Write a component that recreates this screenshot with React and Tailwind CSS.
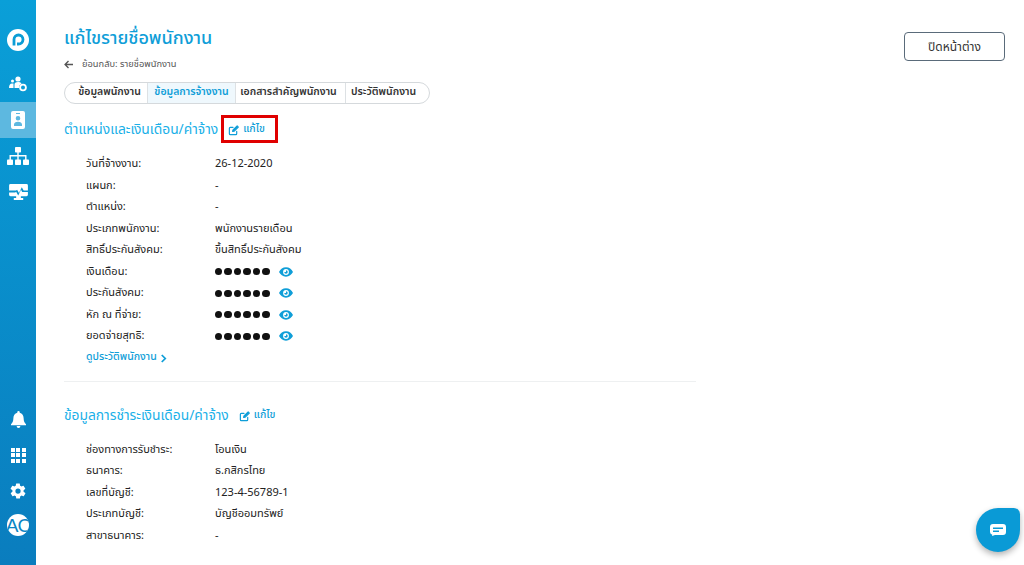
function Edit({ className }) {
  return (
    <svg viewBox="0 0 24 24" className={className} fill="none" stroke="currentColor" strokeWidth="2.6" strokeLinecap="round" strokeLinejoin="round">
      <path d="M19 14v5a2 2 0 0 1-2 2H5a2 2 0 0 1-2-2V7a2 2 0 0 1 2-2h6" />
      <path d="M10 14l1-3.500L20 2l2.500 2.500-8.800 8.700z" fill="currentColor" />
    </svg>
  );
}
function Eye() {
  return (
    <svg viewBox="0 0 24 16" className="w-[14px] h-[10px] ml-[9px] text-[#0f9ed8]">
      <path fill="currentColor" fillRule="evenodd" d="M12 0C6.500 0 2.500 3.500 0 8c2.500 4.500 6.500 8 12 8s9.500-3.500 12-8c-2.500-4.500-6.500-8-12-8zm0 3a5 5 0 1 1 0 10 5 5 0 0 1 0-10z" />
      <path fill="currentColor" d="M12 5a3 3 0 1 1-3 3h3z" />
    </svg>
  );
}
function Row({ label, value, hidden }) {
  return (
    <div className="flex items-center h-[21.5px] text-[11px] text-[#222]">
      <div className="w-[129px]">{label}</div>
      {hidden ? (
        <div className="flex items-center">
          <div className="flex gap-[2.2px]">
            {[0, 1, 2, 3, 4, 5].map((i) => (
              <span key={i} className="w-[7.300px] h-[7.300px] rounded-full bg-[#111]" />
            ))}
          </div>
          <Eye />
        </div>
      ) : (
        <div>{value}</div>
      )}
    </div>
  );
}
function NavIcon({ children, active, className = "" }) {
  return (
    <div className={`w-[36px] h-[36px] flex items-center justify-center ${active ? "bg-[#5db8e0]" : ""} ${className}`}>{children}</div>
  );
}
const tabs = [
  ["ข้อมูลพนักงาน", "w-[82px] pl-[7px]"],
  ["ข้อมูลการจ้างงาน", "w-[88px] bg-[#eff8fd] text-[#0f9ed8]"],
  ["เอกสารสำคัญพนักงาน", "w-[110px] pr-[4px]"],
  ["ประวัติพนักงาน", "w-[85px] pr-[9px]"],
];
export default function App() {
  return (
    <div className="flex w-[1024px] h-[565px] overflow-hidden bg-white relative" style={{ fontFamily: '"Noto Sans Thai","Noto Sans","Open Sans","Liberation Sans",sans-serif' }}>
      <aside className="w-[36px] h-full flex flex-col items-center bg-gradient-to-b from-[#0a9fd8] to-[#0a7dbe] text-white shrink-0">
        <div className="h-[84px] w-full flex flex-col items-center pt-[29px] shrink-0">
          <svg viewBox="0 0 22 22" className="w-[22px] h-[22px]">
            <circle cx="11" cy="11" r="11" fill="white" />
            <path d="M7 16.500 L7 10.500 a4.500 4.500 0 1 1 4.500 4.500 H10" fill="none" stroke="#0a9dd6" strokeWidth="2.800" />
          </svg>
        </div>
        <NavIcon className="h-[36px] -mt-[18px]">
          <svg viewBox="0 0 18 16" className="w-[18px] h-[16px]" fill="white">
            <circle cx="9" cy="3" r="2.600" /><circle cx="3.500" cy="5" r="1.500" />
            <path d="M0 12c0-3 1-4.500 3-4.500h1.500V12zM5.500 12V8.500c0-1.500 1-2.500 3.500-2.500 1.800 0 3 .5 3.500 1.500A5 5 0 0 0 10 12z" />
            <circle cx="14" cy="11.500" r="3.800" /><circle cx="14" cy="11.500" r="2" fill="#0a9dd6" />
          </svg>
        </NavIcon>
        <NavIcon active>
          <svg viewBox="0 0 14 18" className="w-[14px] h-[18px]" fill="white">
            <path fillRule="evenodd" d="M2 0h10a2 2 0 0 1 2 2v14a2 2 0 0 1-2 2H2a2 2 0 0 1-2-2V2a2 2 0 0 1 2-2zm3 2v1h4V2zm2 3a2.300 2.300 0 1 0 0 4.600A2.300 2.300 0 0 0 7 5zM3 15h8v-1.500c0-1.500-1.500-2.800-4-2.800s-4 1.300-4 2.800z" />
          </svg>
        </NavIcon>
        <NavIcon>
          <svg viewBox="0 0 22 18" className="w-[22px] h-[18px]" fill="white">
            <rect x="8" y="0" width="6" height="5.500" rx=".8" /><rect x="0" y="12.500" width="6" height="5.500" rx=".8" /><rect x="8" y="12.500" width="6" height="5.500" rx=".8" /><rect x="16" y="12.500" width="6" height="5.500" rx=".8" />
            <path d="M10.300 5h1.400v3h7.800v5h-1.400V9.400h-6.400V13h-1.400V9.400H3.900V13H2.500V8h7.800z" />
          </svg>
        </NavIcon>
        <NavIcon>
          <svg viewBox="0 0 20 17" className="w-[19px] h-[16px]" fill="white">
            <path d="M1.500 0h17A1.500 1.500 0 0 1 20 1.500V7h-4.500l-2-3.500-3 6-2-3.500-1 1H0V1.500A1.500 1.500 0 0 1 1.500 0zM0 9h6.500l1-.8 2.200 4 3-6 1.200 2.300H20v3A1.500 1.500 0 0 1 18.500 13h-6v2H15v2H5v-2h2.500v-2h-6A1.500 1.500 0 0 1 0 11.500z" />
          </svg>
        </NavIcon>
        <div className="mt-auto flex flex-col items-center pb-[29px]">
          <NavIcon>
            <svg viewBox="0 0 16 18" className="w-[15px] h-[17px]" fill="white">
              <path d="M8 0a1.300 1.300 0 0 1 1.300 1.300v.6C12 2.500 13.500 5 13.500 8c0 3 .8 4.500 2.500 6v1H0v-1c1.700-1.500 2.500-3 2.500-6 0-3 1.500-5.500 4.200-6.100v-.6A1.300 1.300 0 0 1 8 0zM6 16h4a2 2 0 0 1-4 0z" />
            </svg>
          </NavIcon>
          <NavIcon>
            <div className="grid grid-cols-3 gap-[1.500px]">
              {[...Array(9)].map((_, i) => (
                <span key={i} className="w-[4px] h-[4px] bg-white" />
              ))}
            </div>
          </NavIcon>
          <NavIcon>
            <svg viewBox="0 0 24 24" className="w-[18px] h-[18px]" fill="white">
              <path fillRule="evenodd" d="M19.400 13a7.600 7.600 0 0 0 0-2l2.100-1.600a.5.5 0 0 0 .1-.6l-2-3.500a.5.5 0 0 0-.6-.2l-2.500 1a7.300 7.300 0 0 0-1.700-1l-.4-2.700a.5.5 0 0 0-.5-.4h-4a.5.5 0 0 0-.5.400l-.4 2.700a7.300 7.300 0 0 0-1.700 1l-2.500-1a.5.5 0 0 0-.6.2l-2 3.500a.5.5 0 0 0 .1.600L4.600 11a7.600 7.600 0 0 0 0 2l-2.100 1.600a.5.5 0 0 0-.1.6l2 3.500a.5.5 0 0 0 .6.2l2.500-1c.5.400 1.100.700 1.700 1l.4 2.700a.5.5 0 0 0 .5.400h4a.5.5 0 0 0 .5-.4l.4-2.700c.6-.3 1.200-.6 1.700-1l2.500 1a.5.5 0 0 0 .6-.2l2-3.500a.5.5 0 0 0-.1-.6zM12 15.500a3.500 3.500 0 1 1 0-7 3.500 3.500 0 0 1 0 7z" />
            </svg>
          </NavIcon>
          <div className="w-[22px] h-[22px] mt-[5px] rounded-full bg-white flex items-center justify-center overflow-hidden text-[#0a84c4] text-[19px] leading-none tracking-[-1px] whitespace-nowrap" style={{ fontFamily: '"Liberation Sans",sans-serif', fontWeight: 300 }}>AC</div>
        </div>
      </aside>
      <main className="flex-1 pl-[28px] pt-[26px] pr-[19px] min-w-0">
        <div className="flex justify-between items-start">
          <div>
            <h1 className="text-[18px] leading-[26px] text-[#0f9ed8] font-medium">แก้ไขรายชื่อพนักงาน</h1>
            <div className="flex items-center mt-[5px] text-[9.300px] leading-[14px] text-[#555]">
              <svg viewBox="0 0 10 10" className="w-[9px] h-[9px] mr-[9px]" fill="none" stroke="#555" strokeWidth="1.500"><path d="M10 5H1.500M5 1.200 1.200 5 5 8.800" /></svg>
              ย้อนกลับ: รายชื่อพนักงาน
            </div>
          </div>
          <button className="w-[101px] h-[29px] mt-[6px] border border-[#5a6b7a] rounded-[4px] text-[12px] text-[#333] bg-white">ปิดหน้าต่าง</button>
        </div>
        <div className="flex w-[366px] h-[22px] mt-[11px] border border-[#d5d9dc] rounded-full overflow-hidden text-[10.500px] font-semibold text-[#333]">
          {tabs.map(([t, c], i) => (
            <div key={t} className={`flex items-center justify-center shrink-0 ${i ? "border-l border-[#dde1e4]" : ""} ${c}`}>{t}</div>
          ))}
        </div>
        <section className="w-[632px] border-b border-[#eef0f1] pb-[12px]">
          <div className="flex items-center h-[28px] mt-[12px] relative">
            <h2 className="text-[13.800px] text-[#1ab0e8]">ตำแหน่งและเงินเดือน/ค่าจ้าง</h2>
            <div className="flex items-center ml-[10px] text-[#0f9ed8] text-[10.500px] font-medium">
              <Edit className="w-[11px] h-[11px] mr-[4px]" />แก้ไข
            </div>
            <div className="absolute left-[157px] -top-[1px] w-[57px] h-[28px] border-[3px] border-[#e00000]" />
          </div>
          <div className="pl-[22px] mt-[9.500px]">
            <Row label="วันที่จ้างงาน:" value="26-12-2020" />
            <Row label="แผนก:" value="-" />
            <Row label="ตำแหน่ง:" value="-" />
            <Row label="ประเภทพนักงาน:" value="พนักงานรายเดือน" />
            <Row label="สิทธิ์ประกันสังคม:" value="ขึ้นสิทธิ์ประกันสังคม" />
            <Row label="เงินเดือน:" hidden />
            <Row label="ประกันสังคม:" hidden />
            <Row label="หัก ณ ที่จ่าย:" hidden />
            <Row label="ยอดจ่ายสุทธิ:" hidden />
            <div className="flex items-center h-[22px] text-[10.500px] text-[#0f9ed8] font-medium">
              ดูประวัติพนักงาน
              <svg viewBox="0 0 8 10" className="w-[7px] h-[9px] ml-[3px]" fill="none" stroke="currentColor" strokeWidth="2"><path d="M2 1l4 4-4 4" /></svg>
            </div>
          </div>
        </section>
        <section>
          <div className="flex items-center h-[28px] mt-[20px]">
            <h2 className="text-[13.800px] text-[#1ab0e8]">ข้อมูลการชำระเงินเดือน/ค่าจ้าง</h2>
            <div className="flex items-center ml-[10px] text-[#0f9ed8] text-[10.500px] font-medium">
              <Edit className="w-[11px] h-[11px] mr-[4px]" />แก้ไข
            </div>
          </div>
          <div className="pl-[22px] mt-[9px]">
            <Row label="ช่องทางการรับชำระ:" value="โอนเงิน" />
            <Row label="ธนาคาร:" value="ธ.กสิกรไทย" />
            <Row label="เลขที่บัญชี:" value="123-4-56789-1" />
            <Row label="ประเภทบัญชี:" value="บัญชีออมทรัพย์" />
            <Row label="สาขาธนาคาร:" value="-" />
          </div>
        </section>
      </main>
      <div className="absolute left-[976px] top-[508px] w-[44px] h-[44px] bg-[#0a9ad6] rounded-[50%_14%_50%_50%] shadow-[0_3px_6px_rgba(0,0,0,0.3)] flex items-center justify-center">
        <svg viewBox="0 0 16 12" className="w-[16px] h-[12px]">
          <path fill="white" d="M3 0h10a3 3 0 0 1 3 3v5a3 3 0 0 1-3 3H5l-3 1 .3-1.200A3 3 0 0 1 0 8V3a3 3 0 0 1 3-3z" />
          <rect x="3" y="3.500" width="10" height="1.500" fill="#0a9ad6" /><rect x="3" y="6.500" width="6" height="1.500" fill="#0a9ad6" />
        </svg>
      </div>
    </div>
  );
}
